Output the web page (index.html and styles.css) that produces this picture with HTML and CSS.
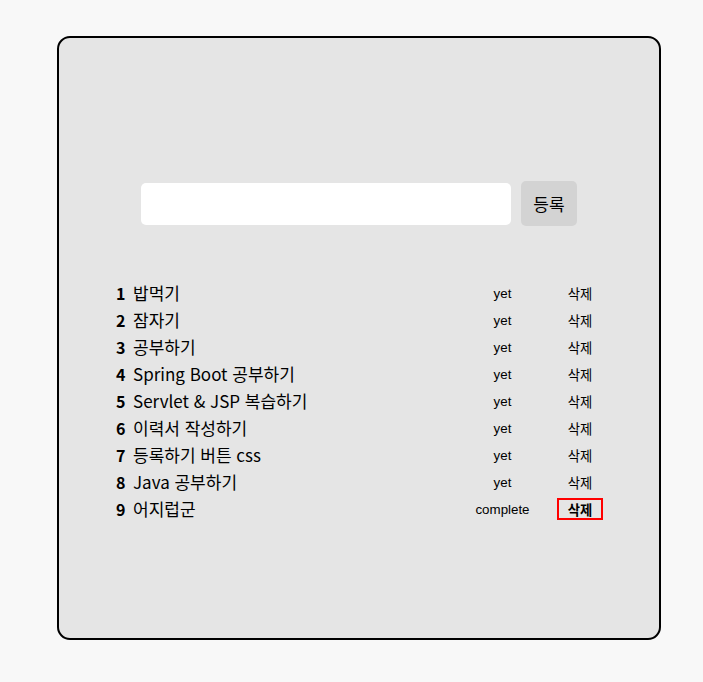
FILE: index.html
```html
<!DOCTYPE html>
<html lang="ko">
<head>
    <meta charset="UTF-8">
    <meta name="viewport" content="width=device-width, initial-scale=1.0">
    <title>Todo List</title>
    <link rel="stylesheet" href="styles.css">
</head>
<body>
    <div class="todo-box">
        <form class="todo-form">
            <input type="text" class="todo-input">
            <button type="button" class="add-btn">등록</button>
        </form>

        <ul class="todo-list">
            <li class="todo-item">
                <span class="num">1</span>
                <span class="title">밥먹기</span>
                <span class="status">yet</span>
                <button class="del-btn">삭제</button>
            </li>
            <li class="todo-item">
                <span class="num">2</span>
                <span class="title">잠자기</span>
                <span class="status">yet</span>
                <button class="del-btn">삭제</button>
            </li>
            <li class="todo-item">
                <span class="num">3</span>
                <span class="title">공부하기</span>
                <span class="status">yet</span>
                <button class="del-btn">삭제</button>
            </li>
            <li class="todo-item">
                <span class="num">4</span>
                <span class="title">Spring Boot 공부하기</span>
                <span class="status">yet</span>
                <button class="del-btn">삭제</button>
            </li>
            <li class="todo-item">
                <span class="num">5</span>
                <span class="title">Servlet &amp; JSP 복습하기</span>
                <span class="status">yet</span>
                <button class="del-btn">삭제</button>
            </li>
            <li class="todo-item">
                <span class="num">6</span>
                <span class="title">이력서 작성하기</span>
                <span class="status">yet</span>
                <button class="del-btn">삭제</button>
            </li>
            <li class="todo-item">
                <span class="num">7</span>
                <span class="title">등록하기 버튼 css</span>
                <span class="status">yet</span>
                <button class="del-btn">삭제</button>
            </li>
            <li class="todo-item">
                <span class="num">8</span>
                <span class="title">Java 공부하기</span>
                <span class="status">yet</span>
                <button class="del-btn">삭제</button>
            </li>
            <li class="todo-item">
                <span class="num">9</span>
                <span class="title">어지럽군</span>
                <span class="status">complete</span>
                <button class="del-btn active">삭제</button>
            </li>
        </ul>
    </div>
</body>
</html>
```

FILE: styles.css
```css
body {
    font-family: "Noto Sans CJK KR", sans-serif;
    background-color: #f8f8f8;
    color: #000;
    margin: 0;
    padding: 36px 0 0 57px;
}

.todo-box {
    box-sizing: border-box;
    width: 604px;
    height: 604px;
    background: #e5e5e5;
    border: 2px solid #000;
    border-radius: 13px;
    padding-top: 143px;
}

.todo-form {
    display: flex;
    justify-content: center;
    align-items: center;
    gap: 10px;
    margin: 0;
}

.todo-input {
    width: 370px;
    height: 42px;
    box-sizing: border-box;
    border: none;
    border-radius: 5px;
    background: #fff;
    padding: 0 10px;
}

.add-btn {
    width: 56px;
    height: 45px;
    border: none;
    border-radius: 5px;
    background-color: #d3d3d3;
    font-family: "Noto Sans CJK KR", sans-serif;
    font-size: 17px;
    color: #000;
    cursor: pointer;
}

.todo-list {
    list-style: none;
    margin: 53px 0 0;
    padding: 0 56px 0 57px;
}

.todo-item {
    display: grid;
    grid-template-columns: 17px 1fr 109px 46px;
    align-items: center;
    height: 27px;
    font-size: 16px;
    line-height: 20px;
}

.num {
    font-weight: bold;
}

.title {
    font-size: 17px;
}

.status,
.del-btn {
    font-family: "Liberation Sans", "Noto Sans CJK KR", sans-serif;
    font-size: 13.33px;
    text-align: center;
}

.status {
    padding-top: 2px;
}

.del-btn {
    height: 22px;
    padding: 0;
    border: 2px solid transparent;
    background: transparent;
    color: #000;
    cursor: pointer;
}

.del-btn.active {
    border-color: red;
    font-weight: bold;
}
```
